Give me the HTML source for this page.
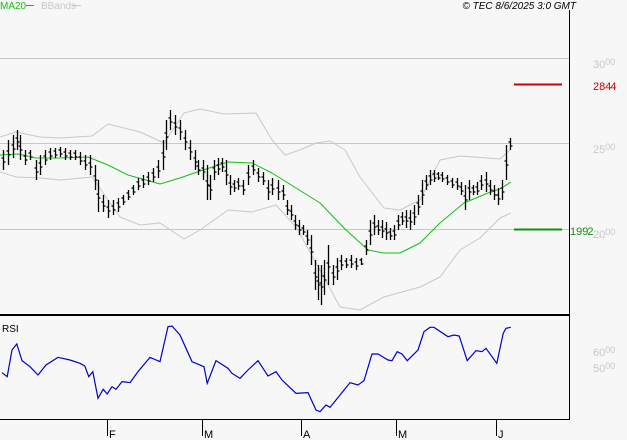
<!DOCTYPE html>
<html><head><meta charset="utf-8"><style>
body{margin:0;width:627px;height:440px;background:#f7f7f7;overflow:hidden;font-family:"Liberation Sans",sans-serif}
svg{display:block}
</style></head><body>
<svg width="627" height="440" xmlns="http://www.w3.org/2000/svg" font-family="Liberation Sans, sans-serif">
<rect width="627" height="440" fill="#f7f7f7"/>
<g stroke="#c8c8c8" stroke-width="1">
<line x1="0" y1="58.5" x2="569" y2="58.5"/>
<line x1="0" y1="143.5" x2="569" y2="143.5"/>
<line x1="0" y1="229.5" x2="569" y2="229.5"/>
</g>
<g fill="none" stroke-width="1" stroke-linejoin="round">
<polyline stroke="#c8c8c8" points="0,137 16,132 40,137 60,138 92,136 108,124 140,132 164,143 184,113 200,109 224,114 256,113 272,140 285,155 300,150 316,143 330,141 345,150 360,177 384,208 400,210 420,200 440,160 460,156 500,159 510,150"/>
<polyline stroke="#c8c8c8" points="0,172 16,177 40,178 60,180 92,177 108,200 120,217 140,225 160,223 184,239 200,230 228,210 252,212 276,205 296,227 320,270 340,307 360,310 384,297 420,287 440,277 460,250 480,238 500,218 511,213"/>
<polyline stroke="#10c010" points="0,155 18,154 36,158 60,158 88,157 108,165 128,175 160,184 180,178 200,171 228,162 252,163 272,173 296,188 320,203 344,228 368,250 384,253 400,253 420,243 440,223 464,203 488,193 500,189 511,182"/>
</g>
<path id="bars" stroke="#000" stroke-width="1.3" fill="none"/>
<g transform="translate(0,150) scale(0.4,0.33333)">
<polyline fill="none" stroke="#0000d0" stroke-width="1.2" vector-effect="non-scaling-stroke" points="5,668 18,680 30,600 42,582 55,632 75,650 95,675 115,645 145,622 175,630 200,640 212,648 222,680 232,665 245,745 258,718 268,732 280,710 290,718 305,695 325,698 345,665 375,622 400,635 420,530 430,528 450,555 480,635 510,650 518,700 540,632 570,655 580,670 600,685 620,660 645,632 670,678 690,665 705,690 740,730 770,728 790,780 800,785 815,765 825,772 840,750 875,698 895,705 910,692 930,612 945,612 970,630 980,632 993,605 1005,612 1018,632 1045,600 1060,545 1075,532 1085,532 1120,560 1135,555 1148,558 1168,632 1190,602 1205,605 1215,595 1242,640 1258,550 1265,535 1277,532"/>
</g>
<line x1="514" y1="84.5" x2="562" y2="84.5" stroke="#cc0000" stroke-width="2"/>
<line x1="514" y1="229.5" x2="562" y2="229.5" stroke="#109010" stroke-width="2"/>
<line x1="569.5" y1="10" x2="569.5" y2="420" stroke="#000" stroke-width="1"/>
<line x1="0" y1="315" x2="570" y2="315" stroke="#000" stroke-width="2"/>
<line x1="0" y1="419.5" x2="570" y2="419.5" stroke="#000" stroke-width="1"/>
<g stroke="#000" stroke-width="1">
<line x1="107.5" y1="420" x2="107.5" y2="436"/>
<line x1="202.5" y1="420" x2="202.5" y2="436"/>
<line x1="301.5" y1="420" x2="301.5" y2="436"/>
<line x1="396.5" y1="420" x2="396.5" y2="436"/>
<line x1="496.5" y1="420" x2="496.5" y2="436"/>
</g>
<g font-size="11" fill="#000">
<text x="109" y="438">F</text><text x="204" y="438">M</text><text x="303" y="438">A</text><text x="398" y="438">M</text><text x="498" y="438">J</text>
<text x="2" y="332" font-size="10">RSI</text>
</g>
<text x="0" y="9" font-size="10" fill="#10c010">MA20</text>
<line x1="26" y1="5.5" x2="34" y2="5.5" stroke="#10c010"/>
<text x="41" y="9" font-size="10" fill="#c8c8c8">BBands</text>
<line x1="72" y1="5.5" x2="81" y2="5.5" stroke="#c8c8c8"/>
<text x="576" y="9" font-size="10" font-style="italic" text-anchor="end" fill="#000">© TEC 8/6/2025 3:0 GMT</text>
<g font-size="11" fill="#c8c8c8">
<text x="593" y="68">30<tspan font-size="9" dy="-3">00</tspan></text>
<text x="593" y="153">25<tspan font-size="9" dy="-3">00</tspan></text>
<text x="593" y="238">20<tspan font-size="9" dy="-3">00</tspan></text>
<text x="593" y="356">60<tspan font-size="9" dy="-3">00</tspan></text>
<text x="593" y="372">50<tspan font-size="9" dy="-3">00</tspan></text>
</g>
<text x="593" y="90" font-size="11" fill="#cc0000">28<tspan letter-spacing="-1">44</tspan></text>
<text x="570" y="235" font-size="11" fill="#109010">19<tspan letter-spacing="-1">92</tspan></text>
</svg>
<script>
var b=[[3,150,170],[8,140,165],[13,135,158],[17,130,150],[20,135,160],[25,150,165],[30,150,160],[36,160,180],[40,155,175],[45,150,165],[50,148,160],[55,148,158],[60,147,157],[65,148,160],[70,150,160],[75,150,160],[80,152,165],[85,155,170],[90,155,175],[95,165,190],[98,180,212],[103,195,212],[108,200,218],[113,200,215],[118,198,212],[123,195,205],[128,190,200],[133,185,195],[138,178,190],[143,175,188],[148,172,185],[153,168,182],[158,160,178],[163,140,170],[166,120,150],[170,110,130],[175,115,135],[180,120,140],[185,130,150],[190,140,160],[195,150,170],[198,160,175],[203,160,180],[207,165,200],[210,175,200],[214,160,180],[218,158,175],[222,158,172],[226,160,185],[230,175,195],[234,180,192],[238,178,190],[243,180,195],[248,165,185],[253,160,175],[258,168,182],[263,172,185],[268,180,200],[272,178,195],[278,180,200],[283,185,200],[287,200,215],[291,205,220],[295,215,230],[299,220,235],[303,225,235],[307,230,245],[311,235,265],[315,260,290],[318,265,300],[321,265,305],[324,260,295],[328,245,285],[333,265,285],[337,258,280],[341,255,270],[346,258,268],[351,255,268],[356,258,270],[361,258,265],[366,240,255],[370,220,245],[374,215,235],[378,220,235],[382,220,238],[386,222,240],[390,228,240],[394,225,240],[398,215,230],[402,212,225],[406,210,228],[410,210,230],[414,205,225],[418,195,215],[422,180,205],[426,175,190],[430,170,185],[434,170,182],[438,172,180],[442,172,182],[447,175,185],[452,178,188],[457,178,190],[461,182,195],[465,185,210],[469,180,200],[473,185,195],[477,182,195],[481,175,190],[486,172,192],[490,180,195],[494,185,200],[498,188,205],[502,180,200],[506,145,180],[510,138,150]];
var d="";b.forEach(function(r){var x=r[0]+.5,m=Math.round((r[1]+r[2])/2);d+="M"+x+" "+r[1]+"V"+r[2]+"M"+(x-2)+" "+(m-2)+"H"+x+"M"+x+" "+(m+2)+"H"+(x+2);});
document.getElementById("bars").setAttribute("d",d);
</script>
</body></html>
